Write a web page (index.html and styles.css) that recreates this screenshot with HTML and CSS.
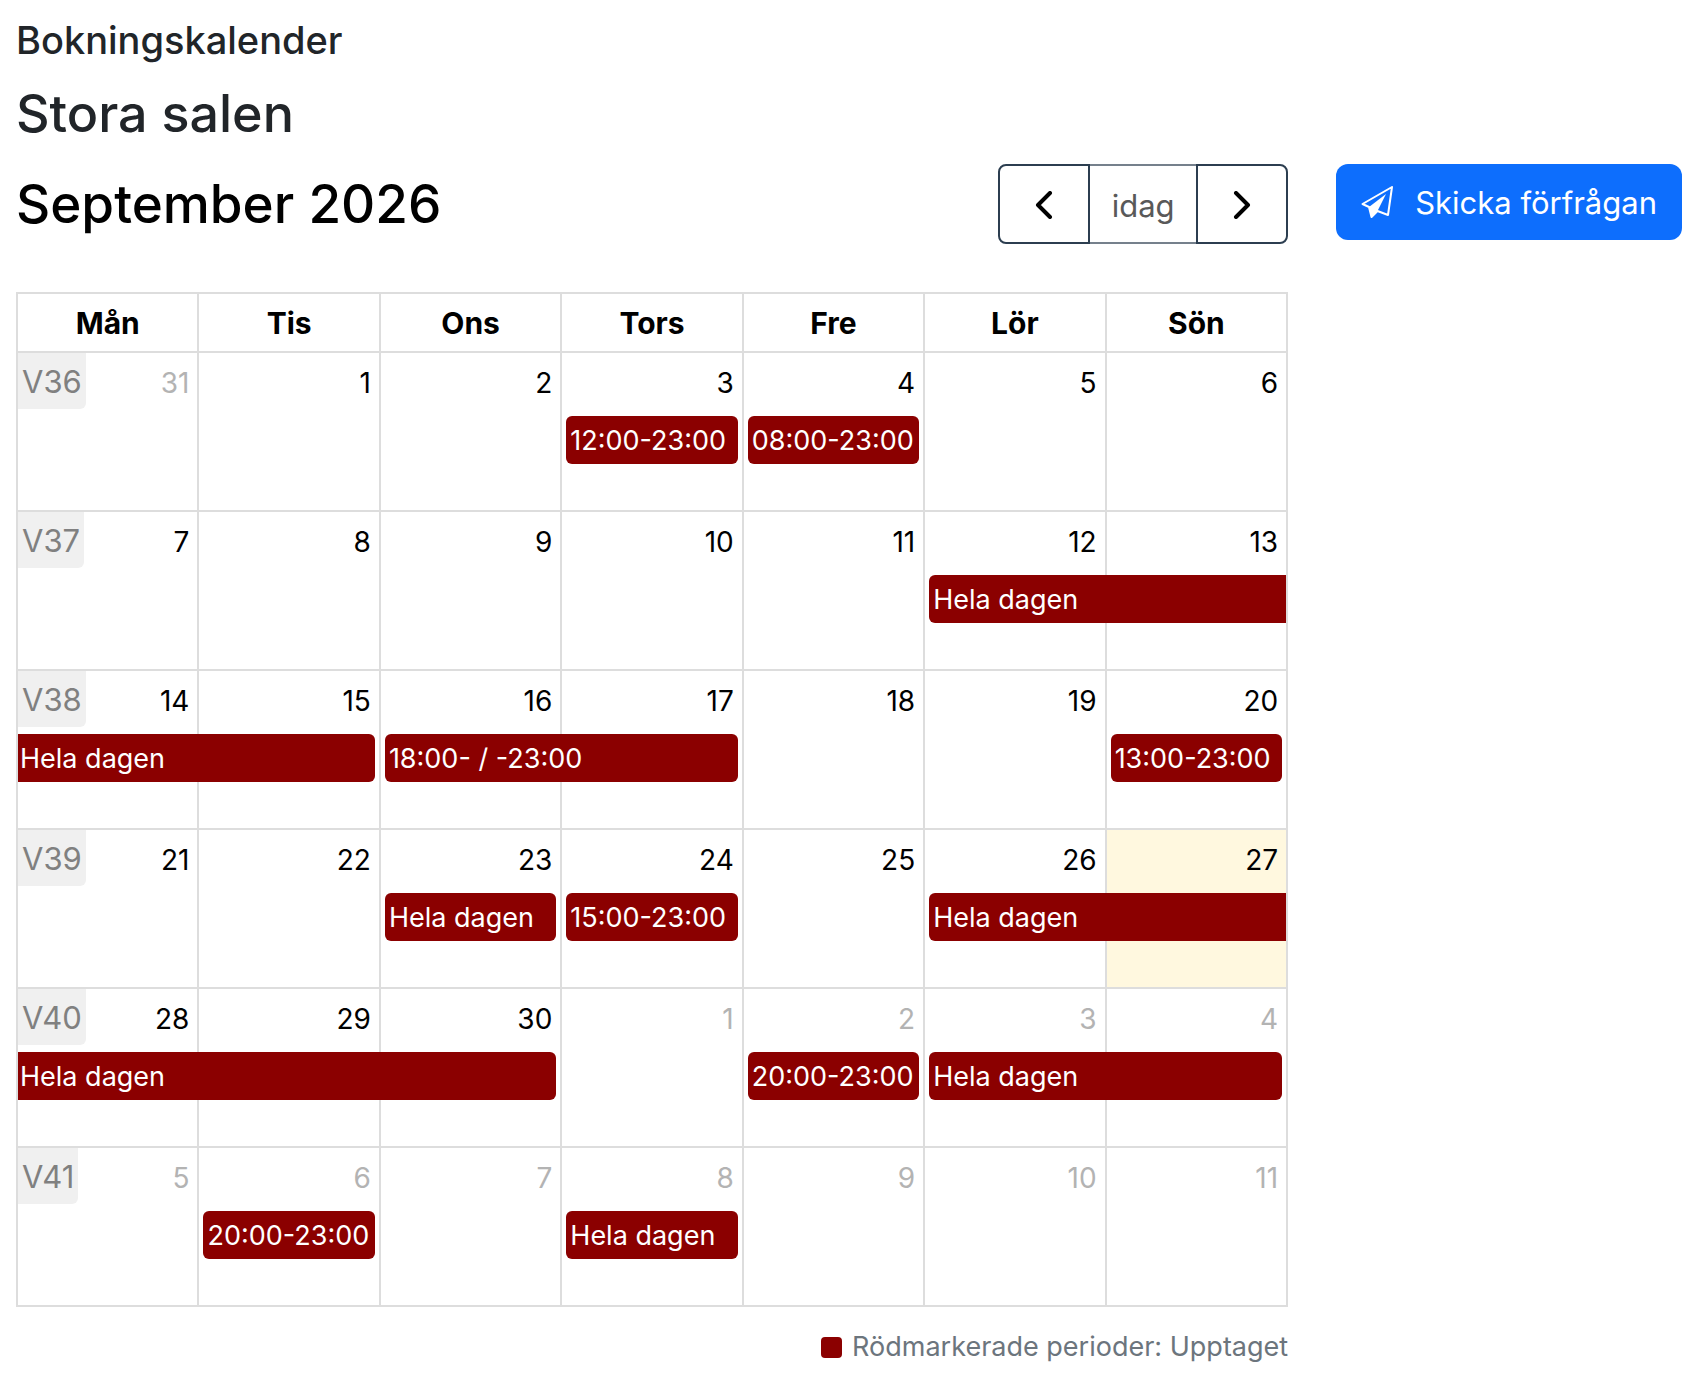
FILE: index.html
```html
<!DOCTYPE html>
<html lang="sv">
<head>
    <meta charset="utf-8">
    <meta name="viewport" content="width=device-width, initial-scale=1">
    <title>Bokningskalender</title>
    <link rel="stylesheet" href="styles.css">
</head>
<body>
    <h3 class="page-title">Bokningskalender</h3>
    <h2 class="room-title">Stora salen</h2>

    <div class="booking">
        <main class="calendar">
            <div class="toolbar">
                <h2 class="month-title">September 2026</h2>
                <div class="button-group">
                    <button type="button" class="nav-button" aria-label="Föregående">
                        <svg class="chevron" viewBox="0 0 18 28"><path d="M15 2 3 14l12 12"/></svg>
                    </button>
                    <button type="button" class="nav-button today-button" disabled>idag</button>
                    <button type="button" class="nav-button" aria-label="Nästa">
                        <svg class="chevron" viewBox="0 0 18 28"><path d="M3 2l12 12L3 26"/></svg>
                    </button>
                </div>
            </div>

            <table class="month">
                <thead>
                    <tr>
                        <th>Mån</th>
                        <th>Tis</th>
                        <th>Ons</th>
                        <th>Tors</th>
                        <th>Fre</th>
                        <th>Lör</th>
                        <th>Sön</th>
                    </tr>
                </thead>
                <tbody>
                    <tr>
                        <td class="other"><div class="day-top"><span class="week">V36</span><span class="day">31</span></div></td>
                        <td><div class="day-top"><span class="day">1</span></div></td>
                        <td><div class="day-top"><span class="day">2</span></div></td>
                        <td><div class="day-top"><span class="day">3</span></div><div class="event">12:00-23:00</div></td>
                        <td><div class="day-top"><span class="day">4</span></div><div class="event">08:00-23:00</div></td>
                        <td><div class="day-top"><span class="day">5</span></div></td>
                        <td><div class="day-top"><span class="day">6</span></div></td>
                    </tr>
                    <tr>
                        <td><div class="day-top"><span class="week">V37</span><span class="day">7</span></div></td>
                        <td><div class="day-top"><span class="day">8</span></div></td>
                        <td><div class="day-top"><span class="day">9</span></div></td>
                        <td><div class="day-top"><span class="day">10</span></div></td>
                        <td><div class="day-top"><span class="day">11</span></div></td>
                        <td><div class="day-top"><span class="day">12</span></div><div class="event span-2 to-next">Hela dagen</div></td>
                        <td><div class="day-top"><span class="day">13</span></div></td>
                    </tr>
                    <tr>
                        <td><div class="day-top"><span class="week">V38</span><span class="day">14</span></div><div class="event span-2 from-prev">Hela dagen</div></td>
                        <td><div class="day-top"><span class="day">15</span></div></td>
                        <td><div class="day-top"><span class="day">16</span></div><div class="event span-2">18:00- / -23:00</div></td>
                        <td><div class="day-top"><span class="day">17</span></div></td>
                        <td><div class="day-top"><span class="day">18</span></div></td>
                        <td><div class="day-top"><span class="day">19</span></div></td>
                        <td><div class="day-top"><span class="day">20</span></div><div class="event">13:00-23:00</div></td>
                    </tr>
                    <tr>
                        <td><div class="day-top"><span class="week">V39</span><span class="day">21</span></div></td>
                        <td><div class="day-top"><span class="day">22</span></div></td>
                        <td><div class="day-top"><span class="day">23</span></div><div class="event">Hela dagen</div></td>
                        <td><div class="day-top"><span class="day">24</span></div><div class="event">15:00-23:00</div></td>
                        <td><div class="day-top"><span class="day">25</span></div></td>
                        <td><div class="day-top"><span class="day">26</span></div><div class="event span-2 to-next">Hela dagen</div></td>
                        <td class="today"><div class="day-top"><span class="day">27</span></div></td>
                    </tr>
                    <tr>
                        <td><div class="day-top"><span class="week">V40</span><span class="day">28</span></div><div class="event span-3 from-prev">Hela dagen</div></td>
                        <td><div class="day-top"><span class="day">29</span></div></td>
                        <td><div class="day-top"><span class="day">30</span></div></td>
                        <td class="other"><div class="day-top"><span class="day">1</span></div></td>
                        <td class="other"><div class="day-top"><span class="day">2</span></div><div class="event">20:00-23:00</div></td>
                        <td class="other"><div class="day-top"><span class="day">3</span></div><div class="event span-2">Hela dagen</div></td>
                        <td class="other"><div class="day-top"><span class="day">4</span></div></td>
                    </tr>
                    <tr>
                        <td class="other"><div class="day-top"><span class="week">V41</span><span class="day">5</span></div></td>
                        <td class="other"><div class="day-top"><span class="day">6</span></div><div class="event">20:00-23:00</div></td>
                        <td class="other"><div class="day-top"><span class="day">7</span></div></td>
                        <td class="other"><div class="day-top"><span class="day">8</span></div><div class="event">Hela dagen</div></td>
                        <td class="other"><div class="day-top"><span class="day">9</span></div></td>
                        <td class="other"><div class="day-top"><span class="day">10</span></div></td>
                        <td class="other"><div class="day-top"><span class="day">11</span></div></td>
                    </tr>
                </tbody>
            </table>

            <p class="legend"><span class="legend-box"></span>Rödmarkerade perioder: Upptaget</p>
        </main>

        <aside>
            <button type="button" class="send-button">
                <svg class="send-icon" viewBox="0 0 32 32">
                    <path class="send-line" d="M31 1 1.500 18 8 21l2.500 10 6-6L27 29z"/>
                    <path class="send-fold" d="M25 8 8 21l2.500 10.500 6-6.500z"/>
                </svg>
                Skicka förfrågan
            </button>
        </aside>
    </div>
</body>
</html>
```

FILE: styles.css
```css
* {
    box-sizing: border-box;
}
body {
    margin: 0;
    padding: 16px 14px 16px 16px;
    background: #fff;
    color: #212529;
    font-family: Inter, "Liberation Sans", sans-serif;
    font-size: 28px;
}
h2, h3 {
    margin: 0;
    font-weight: 500;
}
.page-title {
    font-size: 38px;
    line-height: 48px;
}
.room-title {
    margin-top: 16px;
    font-size: 52px;
    line-height: 68px;
}
.booking {
    display: grid;
    grid-template-columns: minmax(0, 1fr) auto;
    gap: 48px;
    margin-top: 16px;
}
.toolbar {
    display: flex;
    justify-content: space-between;
    align-items: center;
    margin-bottom: 48px;
}
.month-title {
    color: #000;
    font-size: 53px;
    line-height: 80px;
}
.button-group {
    display: flex;
}
.nav-button {
    display: flex;
    align-items: center;
    justify-content: center;
    width: 92px;
    height: 80px;
    padding: 2px 0 0;
    background: #fff;
    border: 2px solid #2c3e50;
    color: #000;
    font: inherit;
    font-size: 31px;
}
.nav-button:first-child {
    border-radius: 8px 0 0 8px;
}
.nav-button:last-child {
    border-radius: 0 8px 8px 0;
}
.today-button {
    width: 106px;
    border-width: 2px 0;
    border-color: #75808c;
    color: #595959;
}
.chevron {
    width: 18px;
    height: 28px;
    fill: none;
    stroke: #000;
    stroke-width: 4;
    stroke-linecap: round;
    stroke-linejoin: round;
}
.month {
    width: 100%;
    border-collapse: collapse;
    table-layout: fixed;
    color: #000;
}
th, td {
    padding: 0;
    border: 2px solid #ddd;
}
th {
    height: 59px;
    font-size: 30px;
    font-weight: 700;
}
td {
    height: 159px;
    vertical-align: top;
}
.today {
    background: #fff8df;
}
.day-top {
    display: flex;
    justify-content: space-between;
    height: 63px;
}
.week {
    height: 56px;
    padding: 0 4px;
    background: #f0f0f0;
    border-radius: 0 0 6px 0;
    color: #808080;
    font-size: 31px;
    line-height: 58px;
}
.day {
    margin-left: auto;
    padding: 0 8px;
    line-height: 60px;
}
.other .day {
    color: #b3b3b3;
}
/* events lie over the cells to their right */
.event {
    position: relative;
    z-index: 1;
    height: 48px;
    margin: 0 4px;
    padding: 0 4px;
    overflow: hidden;
    background: #8b0000;
    border-radius: 6px;
    color: #fff;
    font-size: 27px;
    line-height: 49px;
    white-space: nowrap;
}
.span-2 {
    width: calc(200% - 6px);
}
.span-3 {
    width: 300%;
}
.from-prev {
    margin-left: 0;
    padding-left: 2px;
    border-radius: 0 6px 6px 0;
}
.to-next {
    border-radius: 6px 0 0 6px;
}
.span-2.from-prev, .span-2.to-next {
    width: calc(200% - 2px);
}
.legend {
    display: flex;
    align-items: center;
    justify-content: flex-end;
    gap: 10px;
    margin: 20px 0 0;
    color: #6c757d;
    font-size: 27px;
    line-height: 40px;
}
.legend-box {
    width: 21px;
    height: 21px;
    background: #8b0000;
    border-radius: 4px;
}
.send-button {
    display: flex;
    align-items: center;
    gap: 22px;
    height: 76px;
    padding: 0 25px;
    background: #0d6efd;
    border: none;
    border-radius: 12px;
    color: #fff;
    font: inherit;
    font-size: 31px;
}
.send-icon {
    width: 32px;
    height: 32px;
    overflow: visible;
}
.send-line {
    fill: none;
    stroke: #fff;
    stroke-width: 2;
    stroke-linejoin: round;
}
.send-fold {
    fill: #fff;
}
```
